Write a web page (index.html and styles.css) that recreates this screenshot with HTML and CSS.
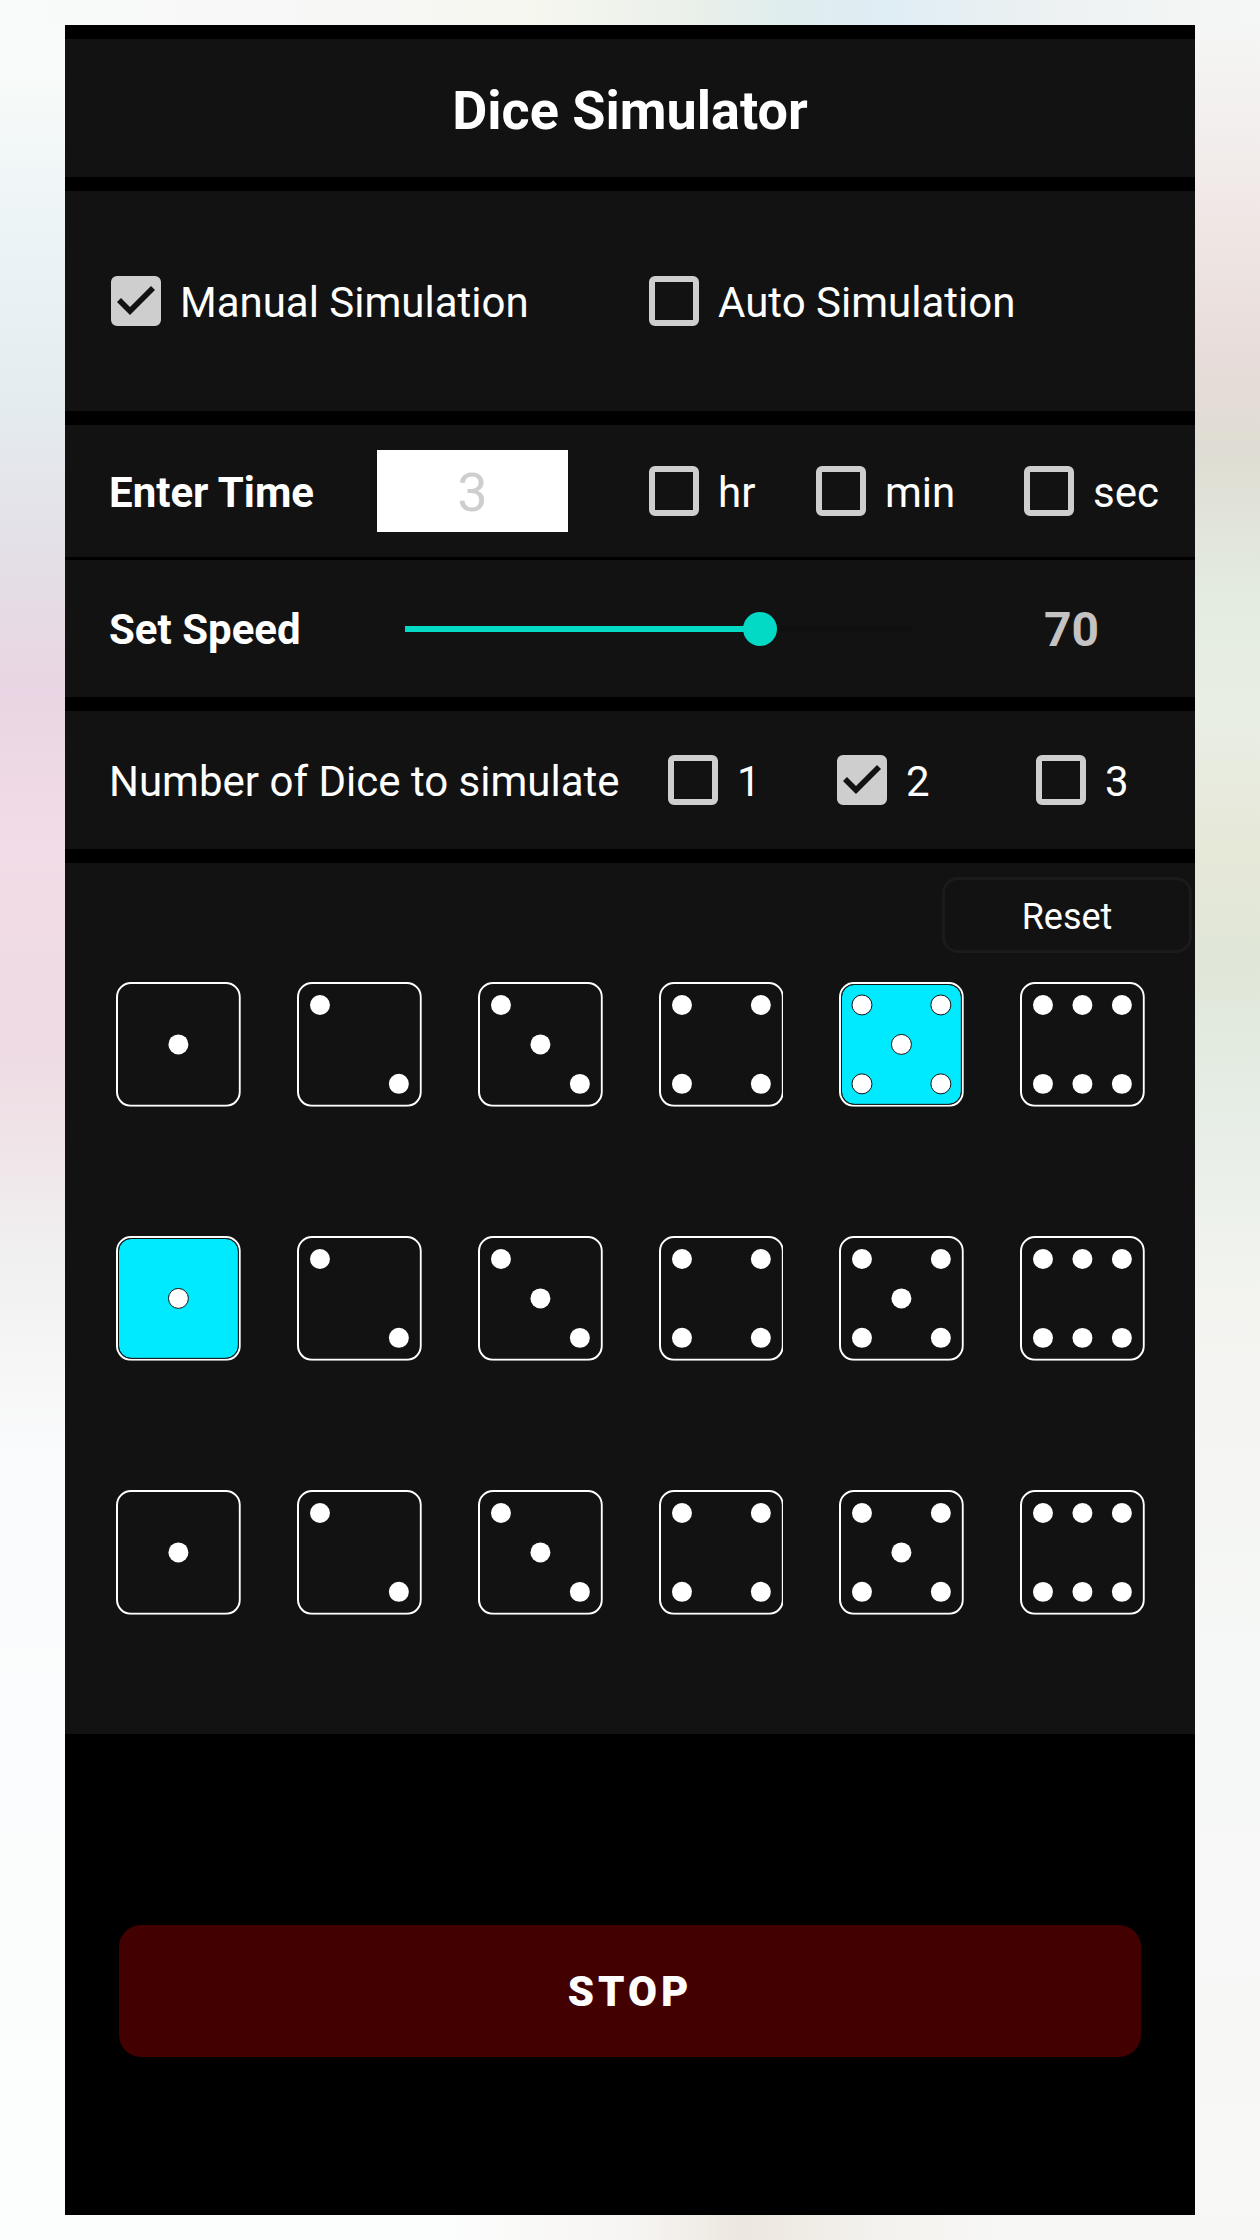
FILE: index.html
```html
<!DOCTYPE html>
<html lang="en">
<head>
    <meta charset="UTF-8">
    <meta name="viewport" content="width=device-width, initial-scale=1.0">
    <title>Dice Simulator</title>
    <link rel="stylesheet" href="styles.css">
</head>
<body>

    <!-- Die faces -->
    <svg class="sprites" aria-hidden="true">
        <symbol id="die-1" viewBox="0 0 125 125">
            <rect class="edge" x="1" y="1" width="123" height="123" rx="14"/>
            <rect class="face" x="2.5" y="2.5" width="120" height="120" rx="13"/>
            <circle class="pip" cx="62.5" cy="62.5" r="10"/>
        </symbol>
        <symbol id="die-2" viewBox="0 0 125 125">
            <rect class="edge" x="1" y="1" width="123" height="123" rx="14"/>
            <rect class="face" x="2.5" y="2.5" width="120" height="120" rx="13"/>
            <circle class="pip" cx="23" cy="23" r="10"/>
            <circle class="pip" cx="102" cy="102" r="10"/>
        </symbol>
        <symbol id="die-3" viewBox="0 0 125 125">
            <rect class="edge" x="1" y="1" width="123" height="123" rx="14"/>
            <rect class="face" x="2.5" y="2.5" width="120" height="120" rx="13"/>
            <circle class="pip" cx="23" cy="23" r="10"/>
            <circle class="pip" cx="62.5" cy="62.5" r="10"/>
            <circle class="pip" cx="102" cy="102" r="10"/>
        </symbol>
        <symbol id="die-4" viewBox="0 0 125 125">
            <rect class="edge" x="1" y="1" width="123" height="123" rx="14"/>
            <rect class="face" x="2.5" y="2.5" width="120" height="120" rx="13"/>
            <circle class="pip" cx="23" cy="23" r="10"/>
            <circle class="pip" cx="102" cy="23" r="10"/>
            <circle class="pip" cx="23" cy="102" r="10"/>
            <circle class="pip" cx="102" cy="102" r="10"/>
        </symbol>
        <symbol id="die-5" viewBox="0 0 125 125">
            <rect class="edge" x="1" y="1" width="123" height="123" rx="14"/>
            <rect class="face" x="2.5" y="2.5" width="120" height="120" rx="13"/>
            <circle class="pip" cx="23" cy="23" r="10"/>
            <circle class="pip" cx="102" cy="23" r="10"/>
            <circle class="pip" cx="62.5" cy="62.5" r="10"/>
            <circle class="pip" cx="23" cy="102" r="10"/>
            <circle class="pip" cx="102" cy="102" r="10"/>
        </symbol>
        <symbol id="die-6" viewBox="0 0 125 125">
            <rect class="edge" x="1" y="1" width="123" height="123" rx="14"/>
            <rect class="face" x="2.5" y="2.5" width="120" height="120" rx="13"/>
            <circle class="pip" cx="23" cy="23" r="10"/>
            <circle class="pip" cx="62.5" cy="23" r="10"/>
            <circle class="pip" cx="102" cy="23" r="10"/>
            <circle class="pip" cx="23" cy="102" r="10"/>
            <circle class="pip" cx="62.5" cy="102" r="10"/>
            <circle class="pip" cx="102" cy="102" r="10"/>
        </symbol>
    </svg>

    <main class="app">
        <header class="panel header">
            <h1>Dice Simulator</h1>
        </header>

        <!-- Simulation mode -->
        <div class="panel row mode">
            <label class="check"><input type="checkbox" checked> Manual Simulation</label>
            <label class="check"><input type="checkbox"> Auto Simulation</label>
        </div>

        <!-- Time and speed -->
        <div class="timing">
            <div class="panel row time">
                <label class="name" for="time">Enter Time</label>
                <input class="time-input" id="time" type="text" inputmode="numeric" placeholder="3">
                <label class="check"><input type="checkbox"> hr</label>
                <label class="check"><input type="checkbox"> min</label>
                <label class="check"><input type="checkbox"> sec</label>
            </div>
            <div class="panel row speed">
                <label class="name" for="speed">Set Speed</label>
                <input class="slider" id="speed" type="range" min="0" max="100" value="70">
                <output class="speed-value" for="speed">70</output>
            </div>
        </div>

        <!-- Number of dice -->
        <div class="panel row count">
            <span>Number of Dice to simulate</span>
            <label class="check"><input type="checkbox"> 1</label>
            <label class="check"><input type="checkbox" checked> 2</label>
            <label class="check"><input type="checkbox"> 3</label>
        </div>

        <!-- Results -->
        <section class="panel results">
            <button class="reset" type="button">Reset</button>
            <div class="dice">
                <svg class="die" viewBox="0 0 125 125"><use href="#die-1"/></svg>
                <svg class="die" viewBox="0 0 125 125"><use href="#die-2"/></svg>
                <svg class="die" viewBox="0 0 125 125"><use href="#die-3"/></svg>
                <svg class="die" viewBox="0 0 125 125"><use href="#die-4"/></svg>
                <svg class="die rolled" viewBox="0 0 125 125"><use href="#die-5"/></svg>
                <svg class="die" viewBox="0 0 125 125"><use href="#die-6"/></svg>

                <svg class="die rolled" viewBox="0 0 125 125"><use href="#die-1"/></svg>
                <svg class="die" viewBox="0 0 125 125"><use href="#die-2"/></svg>
                <svg class="die" viewBox="0 0 125 125"><use href="#die-3"/></svg>
                <svg class="die" viewBox="0 0 125 125"><use href="#die-4"/></svg>
                <svg class="die" viewBox="0 0 125 125"><use href="#die-5"/></svg>
                <svg class="die" viewBox="0 0 125 125"><use href="#die-6"/></svg>

                <svg class="die" viewBox="0 0 125 125"><use href="#die-1"/></svg>
                <svg class="die" viewBox="0 0 125 125"><use href="#die-2"/></svg>
                <svg class="die" viewBox="0 0 125 125"><use href="#die-3"/></svg>
                <svg class="die" viewBox="0 0 125 125"><use href="#die-4"/></svg>
                <svg class="die" viewBox="0 0 125 125"><use href="#die-5"/></svg>
                <svg class="die" viewBox="0 0 125 125"><use href="#die-6"/></svg>
            </div>
        </section>

        <footer class="footer">
            <button class="stop" type="button">STOP</button>
        </footer>
    </main>

</body>
</html>
```
FILE: styles.css
```css
* {
    box-sizing: border-box;
}
body {
    margin: 0;
    padding: 25px 65px;
    min-height: 100vh;
    font-family: Roboto, sans-serif;
    font-size: 42px;
    line-height: 50px;
    color: #fff;
    /* top strip, bottom strip, left side, right side */
    background:
        linear-gradient(to right, #f8fbfa, #f7f7f6 27%, #f6f7ef 42%, #eaf0ea 55%, #e0edee 62%, #dfedf4 70%, #eef2f2 85%, #f5f7f6) top / 100% 25px no-repeat,
        linear-gradient(to right, #fcfdfd 35%, #f7f5f3 50%, #ece7df 59%, #f4f2ee 70%, #f7f7f6 80%) bottom / 100% 25px no-repeat,
        linear-gradient(to bottom, #f8fbf9 3%, #ebf3f6 11%, #e4ecf0 18%, #e4dfe7 25%, #e9d5e3 31%, #f2dce7 38%, #eedbe3 47%, #f1f0f0 56%, #fafbfc 65%, #fcfdfd) left / 65px 100% no-repeat,
        linear-gradient(to bottom, #f5f8f7, #f0e7e5 10%, #e7dcd9 16%, #dfddd3 20%, #e4ece0 27%, #e9eee4 32%, #e6e8d8 38%, #e0e7d8 43%, #e5ede5 49%, #f3f4f0 58%, #f6f8f7 76%, #f8f8f6) right / 65px 100% no-repeat;
}
.sprites {
    position: absolute;
    width: 0;
    height: 0;
}
.app {
    display: flex;
    flex-direction: column;
    gap: 14px;
    padding-top: 14px;
    background: #000;
}
.panel {
    background: #121212;
}
.header {
    padding: 40px 0 34px;
    text-align: center;
}
.header h1 {
    margin: 0;
    font-size: 54px;
    line-height: 64px;
}
.row {
    display: grid;
    align-items: center;
    min-height: 138px;
    padding: 3px 0 0 44px;
}
.mode {
    grid-template-columns: 538fr 546fr;
    min-height: 220px;
    padding-left: 46px;
}
.timing {
    display: grid;
    gap: 3px;
}
.time {
    grid-template-columns: 268fr 272fr 167fr 208fr 171fr;
    min-height: 132px;
}
.speed {
    grid-template-columns: 280fr 539fr 116fr 151fr;
    min-height: 137px;
}
.count {
    grid-template-columns: 559fr 169fr 199fr 159fr;
}
.name {
    font-weight: bold;
}

/* Checkboxes */
.check {
    display: flex;
    align-items: center;
    gap: 19px;
}
.check input {
    appearance: none;
    flex: none;
    display: grid;
    place-items: center;
    width: 50px;
    height: 50px;
    margin: 0 0 3px;
    border: 6px solid #cecece;
    border-radius: 6px;
}
.check input:checked {
    background: #cecece;
}
.check input:checked::before {
    content: "";
    width: 38px;
    height: 38px;
    background: #121212;
    clip-path: polygon(0 20px, 4px 16px, 13px 25px, 34px 4px, 38px 8px, 13px 33px);
}

.time-input {
    width: 191px;
    height: 82px;
    margin-bottom: 3px;
    padding: 3px 0 0;
    border: none;
    background: #fff;
    color: #121212;
    font: inherit;
    font-size: 54px;
    text-align: center;
}
.time-input::placeholder {
    color: #cecece;
}

/* Speed slider */
.slider {
    appearance: none;
    width: 100%;
    height: 34px;
    margin: 0 0 3px;
    background: linear-gradient(to right, transparent 16px, #03dac5 16px 70%, #0f0f0f 70% calc(100% - 16px), transparent calc(100% - 16px)) center / 100% 6px no-repeat;
}
.slider::-webkit-slider-thumb {
    appearance: none;
    width: 34px;
    height: 34px;
    border-radius: 50%;
    background: #03dac5;
}
.speed-value {
    grid-column: 4;
    font-size: 48px;
    font-weight: bold;
    color: #c4c2c2;
}

/* Dice */
.results {
    display: flex;
    flex-direction: column;
    padding: 14px 0 119px;
}
.reset {
    align-self: flex-end;
    width: 250px;
    height: 76px;
    margin-right: 3px;
    padding: 3px 0 0;
    border: 3px solid #1b1b1b;
    border-radius: 16px;
    background: transparent;
    color: #fff;
    font: inherit;
    font-size: 36px;
}
.dice {
    display: grid;
    grid-template-columns: repeat(6, 1fr);
    gap: 129px 56px;
    padding: 29px 50px 0 51px;
}
.die {
    --face: none;
    --outline: none;
    display: block;
    width: 100%;
}
.die.rolled {
    --face: #00eaff;
    --outline: #121212;
}
.edge {
    fill: none;
    stroke: #fff;
    stroke-width: 2;
}
.face {
    fill: var(--face);
    stroke: var(--outline);
}
.pip {
    fill: #fff;
    stroke: var(--outline);
}

.footer {
    padding: 177px 54px 158px;
}
.stop {
    width: 100%;
    height: 132px;
    padding: 2px 0 0;
    border: none;
    border-radius: 22px;
    background: #430000;
    color: #fff;
    font: inherit;
    font-weight: 900;
    letter-spacing: 4px;
}
```
